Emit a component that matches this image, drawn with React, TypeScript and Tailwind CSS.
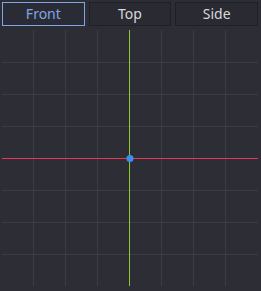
import { useState } from "react";

const views = ["Front", "Top", "Side"];

function Grid() {
  const cols = [31, 63, 95, 159, 191, 223];
  const rows = [32, 64, 96, 160, 192, 224];
  return (
    <svg width="256" height="256" viewBox="0 0 256 256" className="block">
      {cols.map((x) => (
        <rect key={"c" + x} x={x} y={0} width={1} height={256} fill="#3c3c45" />
      ))}
      {rows.map((y) => (
        <rect key={"r" + y} x={0} y={y} width={256} height={1} fill="#3c3c45" />
      ))}
      <rect x={0} y={128} width={256} height={1} fill="#e8365a" />
      <rect x={127} y={0} width={1} height={256} fill="#8cc832" />
      <circle cx={128} cy={128.5} r={3.6} fill="#3a8ff0" />
    </svg>
  );
}

export default function App() {
  const [view, setView] = useState("Front");

  return (
    <div
      className="h-[291px] w-[261px] bg-[#2d2d36] p-[2px]"
      style={{ fontFamily: '"Noto Sans", sans-serif' }}
    >
      <div className="flex w-[256px] gap-1">
        {views.map((v) => (
          <button
            key={v}
            onClick={() => setView(v)}
            className={
              view === v
                ? "h-6 flex-1 border border-[#7ea6e6] bg-[#2b2b35] text-[14px] leading-none text-[#7ea6e6]"
                : "h-6 flex-1 border border-[#1f1f26] bg-[#2a2a33] text-[14px] leading-none text-[#d8d8dc]"
            }
          >
            {v}
          </button>
        ))}
      </div>
      <div className="mt-1">
        <Grid />
      </div>
    </div>
  );
}
